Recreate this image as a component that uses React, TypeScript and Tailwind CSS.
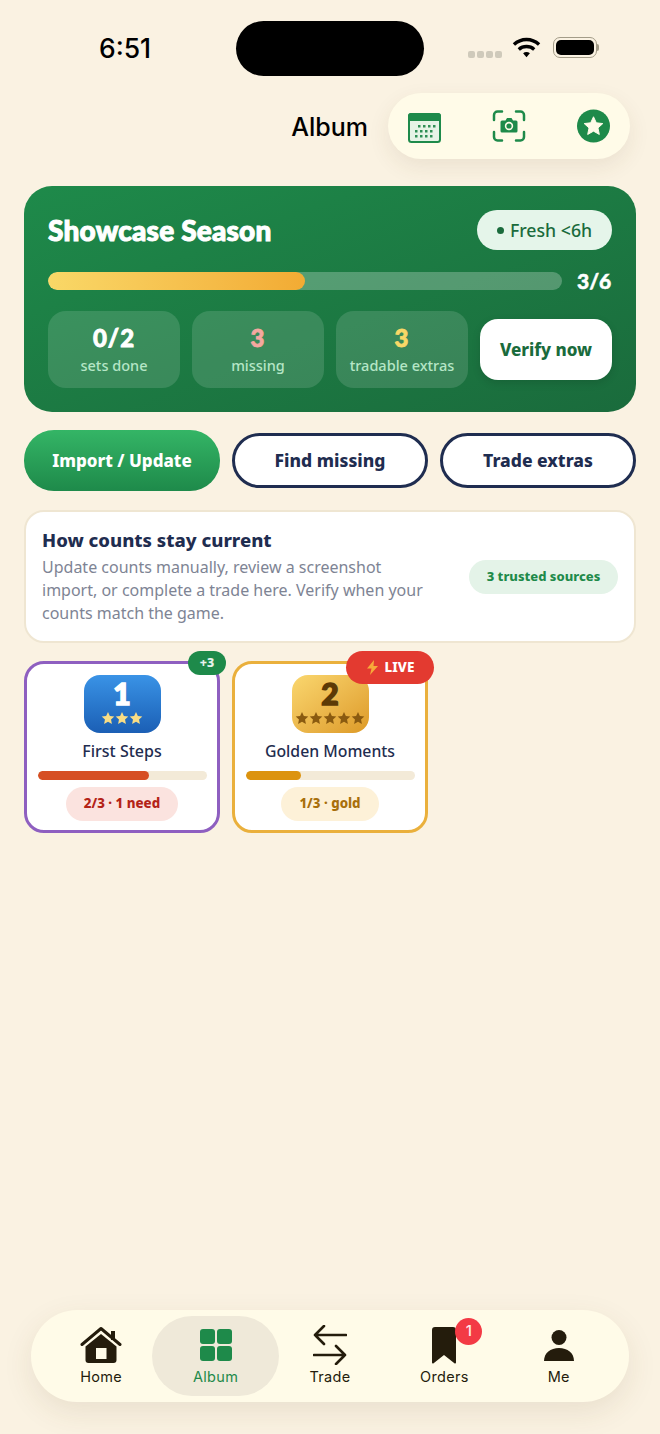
import React from "react";

const body = "font-['Noto_Sans',sans-serif]";
const sys = "font-['Inter',sans-serif]";
const display = "font-['Lato',sans-serif] font-black";

function Calendar() {
  return (
    <svg width="33" height="30" viewBox="0 0 33 30">
      <rect x="1" y="1" width="31" height="28" rx="2.500" fill="#e6f3e6" stroke="#1e8a4a" strokeWidth="2" />
      <path d="M0 8V3a3 3 0 0 1 3-3h27a3 3 0 0 1 3 3v5z" fill="#1e8a4a" />
      {[12, 17, 22].map((y) =>
        [10, 15, 20, 25].map((x) => <rect key={`${x}-${y}`} x={y === 12 ? x : x - 3} y={y} width="2.500" height="2.500" fill="#2f8f55" />),
      )}
    </svg>
  );
}

function CameraScan() {
  return (
    <svg width="34" height="32" viewBox="0 0 34 32" fill="none">
      <path d="M2 10V5a3.500 3.500 0 0 1 3.500-3.500H10M24 1.500h4.500A3.500 3.500 0 0 1 32 5v5M32 22v5a3.500 3.500 0 0 1-3.500 3.500H24M10 30.500H5.500A3.500 3.500 0 0 1 2 27v-5" stroke="#1e8a4a" strokeWidth="2.500" strokeLinecap="round" />
      <path d="M10 10.500h3.500l1.500-2.500h4.500l1.500 2.500H24a1.500 1.500 0 0 1 1.500 1.500v9a1.500 1.500 0 0 1-1.500 1.500H10A1.500 1.500 0 0 1 8.500 21v-9a1.500 1.500 0 0 1 1.500-1.500z" fill="#1e8a4a" />
      <circle cx="17" cy="16" r="4.200" fill="#fffbe8" />
      <circle cx="17" cy="16" r="2.600" fill="#1e8a4a" />
    </svg>
  );
}

function StarBadge() {
  return (
    <svg width="33" height="34" viewBox="0 0 34 34">
      <circle cx="17" cy="17" r="17" fill="#1e8a4a" />
      <path d="M17 7.500l2.900 6.200 6.700.8-5 4.500 1.400 6.700L17 22.300l-6 3.400 1.400-6.700-5-4.500 6.700-.8z" fill="#fffbe8" stroke="#fffbe8" strokeWidth="1" strokeLinejoin="round" />
    </svg>
  );
}

function Wifi() {
  return (
    <svg width="29" height="21" viewBox="0 0 30 21" fill="none" stroke="#000" strokeWidth="3.500">
      <path d="M2 7.500C9.500 .5 20.500 .5 28 7.500" />
      <path d="M7 12.500c4.500-4 11.500-4 16 0" />
      <path d="M11.500 16.500L15 20.500l3.500-4c-2-1.700-5-1.700-7 0z" fill="#000" stroke="none" />
    </svg>
  );
}

function Battery() {
  return (
    <div className="flex items-center">
      <div className="w-[44px] h-[21px] rounded-[7px] border-[1.500px] border-[#a39c88] p-[2px]">
        <div className="w-full h-full rounded-[5px] bg-black" />
      </div>
      <div className="w-[2px] h-[7px] rounded-r-sm bg-[#a39c88]" />
    </div>
  );
}

function Stat({ value, label, color }: { value: string; label: string; color: string }) {
  return (
    <div className="w-[132px] h-[77px] rounded-[18px] bg-white/[.13] flex flex-col items-center pt-[12px]">
      <div className={`${display} [-webkit-text-stroke:0.8px_currentColor] tracking-[1px] text-[24px] leading-[30px] ${color}`}>{value}</div>
      <div className="font-medium text-[14.500px] leading-[20px] mt-[2px] text-[#b5e6c6]">{label}</div>
    </div>
  );
}

function Stars({ n, color, size }: { n: number; color: string; size: number }) {
  return (
    <div className="flex justify-center">
      {Array.from({ length: n }).map((_, i) => (
        <svg key={i} width={size} height={size} viewBox="0 0 24 24">
          <path d="M12 1.500l3.200 7 7.600.9-5.600 5.200 1.500 7.500L12 18.300l-6.700 3.800 1.500-7.500L1.200 9.400l7.600-.9z" fill={color} />
        </svg>
      ))}
    </div>
  );
}

function NavItem({ label, active, children }: { label: string; active?: boolean; children: React.ReactNode }) {
  return (
    <div className={`relative h-[80px] flex flex-col items-center ${active ? "-mx-[6px] rounded-[40px] bg-[#efe9d9]" : ""}`}>
      <div className="h-[49px] flex items-end justify-center relative">{children}</div>
      <div className={`${sys} font-normal tracking-[0.3px] text-[14.500px] leading-[20px] mt-[2px] ${active ? "text-[#1e8a4a]" : "text-[#241c0c]"}`}>{label}</div>
    </div>
  );
}

export default function App() {
  return (
    <div className={`${body} relative w-[660px] h-[1434px] overflow-hidden bg-[#faf2e2] flex flex-col`}>
      {/* status bar */}
      <div className="h-[93px] shrink-0 pt-[21px] flex items-start">
        <div className={`${sys} w-[236px] pl-[99px] text-[26.500px] leading-[55px] font-medium text-black`}>6:51</div>
        <div className="w-[188px] h-[55px] rounded-[28px] bg-black" />
        <div className="flex items-center h-[55px] pl-[44px] -mt-[1px]">
          <div className="flex gap-[2px] mt-[14px] mr-[10px]">
            {[0, 1, 2, 3].map((i) => (
              <div key={i} className="w-[7px] h-[7px] rounded-[2px] bg-[#cfcabb]" />
            ))}
          </div>
          <Wifi />
          <div className="ml-[12px]">
            <Battery />
          </div>
        </div>
      </div>

      {/* header */}
      <div className="h-[66px] shrink-0 flex items-center justify-end pr-[30px] gap-[20px]">
        <div className={`${sys} font-medium text-[25px] text-black pt-[3px]`}>Album</div>
        <div className="w-[242px] h-[66px] rounded-[33px] bg-[#fffbe8] shadow-[0_8px_22px_rgba(90,70,30,0.09)] flex items-center justify-between pl-[20px] pr-[20px]">
          <div className="pt-[4px]"><Calendar /></div>
          <CameraScan />
          <StarBadge />
        </div>
      </div>

      {/* hero */}
      <div className="mx-[24px] mt-[27px] h-[226px] rounded-[28px] bg-gradient-to-br from-[#1e8a4a] to-[#1a6b3c] px-[24px] pt-[24px] text-white shrink-0">
        <div className="flex items-center justify-between h-[40px]">
          <div className={`${display} [-webkit-text-stroke:1px_white] text-[28px] tracking-[0.2px]`}>Showcase Season</div>
          <div className="w-[135px] h-[40px] rounded-[20px] bg-[#e5f5ea] text-[#1a6b3c] flex items-center justify-center gap-[6px] font-medium text-[17.700px]">
            <span className="w-[7px] h-[7px] rounded-full bg-[#1a6b3c]" />
            Fresh &lt;6h
          </div>
        </div>
        <div className="flex items-center mt-[22px] h-[18px]">
          <div className="w-[514px] h-[18px] rounded-full bg-white/25 overflow-hidden">
            <div className="w-1/2 h-full rounded-full bg-gradient-to-r from-[#f9d867] to-[#f2ab33]" />
          </div>
          <div className={`${display} [-webkit-text-stroke:0.5px_white] text-[21px] ml-[15px]`}>3/6</div>
        </div>
        <div className="flex items-center gap-[12px] mt-[21px]">
          <Stat value="0/2" label="sets done" color="text-white" />
          <Stat value="3" label="missing" color="text-[#f5a8a0]" />
          <Stat value="3" label="tradable extras" color="text-[#f9d867]" />
          <div className="w-[132px] h-[61px] rounded-[18px] bg-white text-[#1a6b3c] flex items-center justify-center font-extrabold text-[17px] shadow-[0_3px_8px_rgba(0,0,0,0.12)]">
            Verify now
          </div>
        </div>
      </div>

      {/* actions */}
      <div className="mx-[24px] mt-[18px] h-[61px] flex items-center gap-[12px] shrink-0">
        <div className="w-[196px] h-[61px] rounded-[30px] bg-gradient-to-b from-[#34b566] to-[#1e8a4a] text-white flex items-center justify-center font-extrabold text-[17px]">
          Import / Update
        </div>
        <div className="w-[196px] h-[55px] rounded-[28px] bg-white border-[3px] border-[#1f2d50] text-[#1f2d50] flex items-center justify-center font-extrabold text-[17.500px]">
          Find missing
        </div>
        <div className="w-[196px] h-[55px] rounded-[28px] bg-white border-[3px] border-[#1f2d50] text-[#1f2d50] flex items-center justify-center font-extrabold text-[17.500px]">
          Trade extras
        </div>
      </div>

      {/* info */}
      <div className="mx-[24px] mt-[19px] h-[133px] rounded-[20px] bg-white border-2 border-[#efe6d2] pl-[16px] pr-[16px] flex items-center justify-between shrink-0">
        <div className="w-[390px]">
          <div className="font-extrabold text-[18.500px] leading-[26px] text-[#1f2d50] -mt-[2px]">How counts stay current</div>
          <div className="mt-[3px] text-[16px] leading-[23px] text-[#7e8494]">
            Update counts manually, review a screenshot import, or complete a trade here. Verify when your counts match the game.
          </div>
        </div>
        <div className="w-[149px] h-[34px] rounded-[17px] bg-[#e4f3e8] text-[#1e8a4a] flex items-center justify-center font-extrabold text-[13px]">
          3 trusted sources
        </div>
      </div>

      {/* albums */}
      <div className="mx-[24px] mt-[18px] flex gap-[12px] shrink-0">
        <div className="relative w-[196px] h-[172px] rounded-[20px] bg-white border-[3px] border-[#8e5fc0] flex flex-col items-center pt-[11px]">
          <div className="w-[77px] h-[58px] rounded-[16px] bg-gradient-to-b from-[#3a93e6] to-[#1b5fb5] flex flex-col items-center">
            <div className={`${display} [-webkit-text-stroke:1.500px_white] text-[30px] leading-[36px] text-white`}>1</div>
            <Stars n={3} color="#f9dd85" size={14} />
          </div>
          <div className="mt-[8px] font-medium text-[16px] leading-[20px] text-[#1f2d50]">First Steps</div>
          <div className="mt-[10px] w-[169px] h-[9px] rounded-full bg-[#f3ead8] overflow-hidden">
            <div className="w-[66%] h-full rounded-full bg-[#d64f24]" />
          </div>
          <div className="mt-[7px] w-[112px] h-[34px] rounded-[17px] bg-[#fbe3df] text-[#b42318] flex items-center justify-center font-extrabold text-[13.300px]">
            2/3 · 1 need
          </div>
          <div className="absolute -top-[13px] -right-[9px] w-[38px] h-[24px] rounded-[12px] bg-[#1e8a4a] text-white/90 flex items-center justify-center font-extrabold text-[12.500px]">
            +3
          </div>
        </div>
        <div className="relative w-[196px] h-[172px] rounded-[20px] bg-white border-[3px] border-[#eab03c] flex flex-col items-center pt-[11px]">
          <div className="w-[77px] h-[58px] rounded-[16px] bg-gradient-to-br from-[#fad76e] to-[#dd9a25] flex flex-col items-center">
            <div className={`${display} [-webkit-text-stroke:1.500px_#5c3a06] text-[30px] leading-[36px] text-[#5c3a06]`}>2</div>
            <Stars n={5} color="#8a5a10" size={14} />
          </div>
          <div className="mt-[8px] font-medium text-[15.800px] leading-[20px] text-[#1f2d50]">Golden Moments</div>
          <div className="mt-[10px] w-[169px] h-[9px] rounded-full bg-[#f3ead8] overflow-hidden">
            <div className="w-[33%] h-full rounded-full bg-[#dc930f]" />
          </div>
          <div className="mt-[7px] w-[98px] h-[34px] rounded-[17px] bg-[#fdf1d8] text-[#a86f0b] flex items-center justify-center font-extrabold text-[13.300px]">
            1/3 · gold
          </div>
          <div className="absolute -top-[13px] -right-[9px] w-[88px] h-[33px] rounded-[17px] bg-[#e33a30] text-white flex items-center justify-center gap-[6px] font-extrabold text-[13.500px]">
            <svg width="13" height="15" viewBox="0 0 13 15">
              <path d="M8 0L1 8.500h4.500L4 15l8-9H7.500z" fill="#f7a93a" />
            </svg>
            LIVE
          </div>
        </div>
      </div>

      <div className="flex-1" />

      {/* nav */}
      <div className="mx-[31px] mb-[32px] h-[92px] rounded-[46px] bg-[#fffbe8] shadow-[0_10px_30px_rgba(90,70,30,0.10)] px-[13px] grid grid-cols-5 items-center shrink-0">
        <NavItem label="Home">
          <svg width="42" height="37" viewBox="0 0 42 37" className="mb-[2px]">
            <path d="M5.500 20.500L21 8l15.500 12.500V34a3 3 0 0 1-3 3h-25a3 3 0 0 1-3-3z" fill="#241c0c" />
            <path d="M2 18.500L21 2.500l19 16" fill="none" stroke="#241c0c" strokeWidth="3" strokeLinecap="round" strokeLinejoin="round" />
            <rect x="31" y="5" width="4" height="9" fill="#241c0c" />
            <rect x="16" y="22" width="10.500" height="11" fill="#fffbe8" />
          </svg>
        </NavItem>
        <NavItem label="Album" active>
          <svg width="32" height="32" viewBox="0 0 32 32" fill="#1e8a4a" className="mb-[4px]">
            <rect width="15" height="15" rx="3" />
            <rect x="17" width="15" height="15" rx="3" />
            <rect y="17" width="15" height="15" rx="3" />
            <rect x="17" y="17" width="15" height="15" rx="3" />
          </svg>
        </NavItem>
        <NavItem label="Trade">
          <svg width="34" height="40" viewBox="0 0 34 40" fill="none" stroke="#241c0c" strokeWidth="2.600" strokeLinecap="round" strokeLinejoin="round">
            <path d="M33 10H2M11 1L2 10l9 9" />
            <path d="M1 30h31M23 21l9 9-9 9" />
          </svg>
        </NavItem>
        <NavItem label="Orders">
          <svg width="24" height="37" viewBox="0 0 24 37" className="mb-[1px]">
            <path d="M3 0h18a3 3 0 0 1 3 3v32.500a1 1 0 0 1-1.600.8L12 28 1.600 36.300A1 1 0 0 1 0 35.500V3a3 3 0 0 1 3-3z" fill="#241c0c" />
          </svg>
          <div className={`${sys} absolute top-[2px] left-[23px] w-[27px] h-[27px] rounded-full bg-[#f33a45] text-[#fdeaea] flex items-center justify-center text-[15px] font-medium`}>1</div>
        </NavItem>
        <NavItem label="Me">
          <svg width="30" height="31" viewBox="0 0 30 31" fill="#241c0c" className="mb-[4px]">
            <circle cx="15" cy="7.500" r="7.500" />
            <path d="M0 31c0-8 6.500-13 15-13s15 5 15 13z" />
          </svg>
        </NavItem>
      </div>
    </div>
  );
}
